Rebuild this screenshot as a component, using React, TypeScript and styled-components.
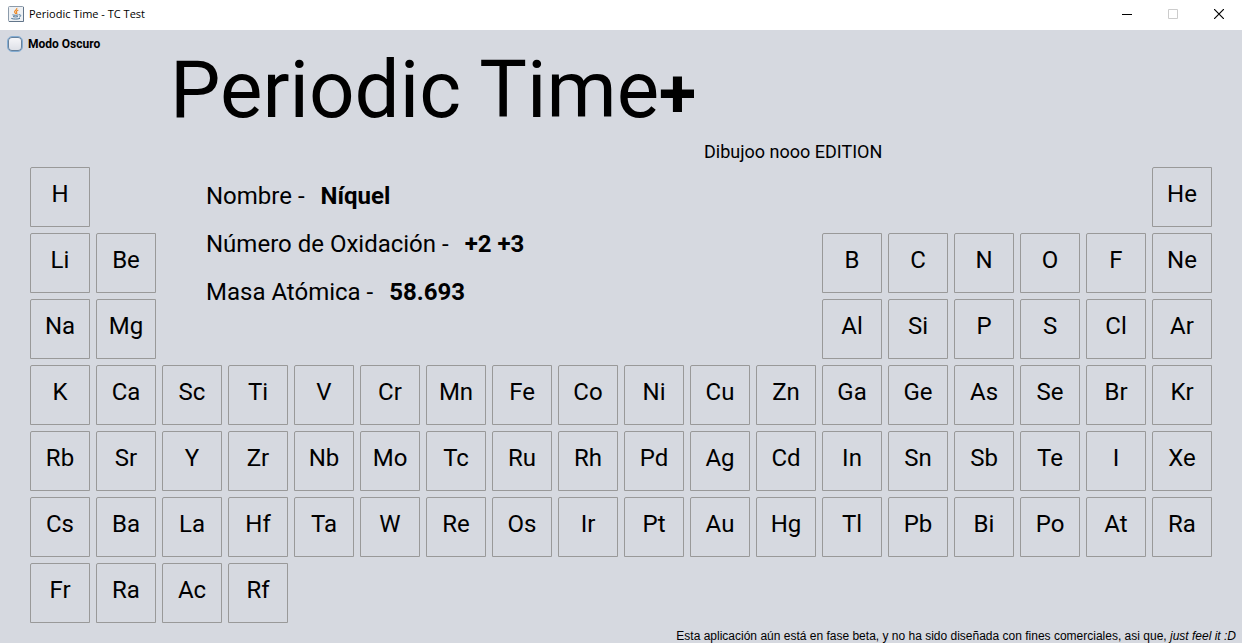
import React, { useState } from "react";
import styled, { createGlobalStyle } from "styled-components";

const GlobalStyle = createGlobalStyle`
  *, *::before, *::after { box-sizing: border-box; }
  html, body, #root { height: 100%; }
  body { margin: 0; background: #d6d9e0; }
`;

const Window = styled.div<{ $dark: boolean }>`
  display: flex;
  flex-direction: column;
  min-height: 100%;
  background: ${(p) => (p.$dark ? "#2b2d33" : "#d6d9e0")};
  color: ${(p) => (p.$dark ? "#f2f2f2" : "#000")};
  font-family: Roboto, sans-serif;
`;

const TitleBar = styled.header`
  display: flex;
  align-items: center;
  height: 30px;
  padding: 0 0 2px 8px;
  background: #fff;
  color: #000;
`;

const WindowTitle = styled.span`
  flex: 1;
  margin-left: 5px;
  font: 11px/16px "Open Sans", sans-serif;
`;

const WindowButton = styled.button<{ $muted?: boolean }>`
  display: flex;
  align-items: center;
  justify-content: center;
  width: 46px;
  height: 28px;
  padding: 0;
  border: 0;
  background: transparent;
  color: ${(p) => (p.$muted ? "#ccc" : "#000")};
`;

const ModeLabel = styled.label`
  display: flex;
  align-items: center;
  align-self: flex-start;
  gap: 5px;
  height: 28px;
  padding-left: 7px;
  font-size: 12px;
  font-weight: 700;
  line-height: 16px;
`;

const ModeCheckbox = styled.input`
  appearance: none;
  width: 16px;
  height: 16px;
  margin: 0;
  border: 1px solid #84add3;
  border-radius: 5px;
  background: linear-gradient(#f8f8fa, #dcdfe6);
  box-shadow: inset 0 0 0 1px #66819c;
  &:checked { background: #39698a; }
`;

const Heading = styled.div`
  display: flex;
  flex-direction: column;
  align-items: flex-start;
  padding-left: 170px;
`;

const AppTitle = styled.h1`
  margin: 0;
  font-size: 80px;
  font-weight: 400;
  line-height: 64px;
`;

const Plus = styled.span`
  font-size: 68px;
  font-weight: 700;
  line-height: 1px;
`;

const Edition = styled.p`
  margin: 20px 0 0 534px;
  font-size: 18px;
  line-height: 20px;
`;

const Table = styled.main`
  display: grid;
  grid-template-columns: repeat(18, minmax(0, 1fr));
  gap: 6px;
  margin-top: 5px;
  padding: 0 30px;
`;

const Element = styled.button<{ $column: number; $row: number }>`
  grid-column: ${(p) => p.$column};
  grid-row: ${(p) => p.$row};
  aspect-ratio: 1;
  padding: 0 0 6px;
  border: 1px solid #999;
  border-radius: 2px 0 0 0;
  background: transparent;
  color: inherit;
  font: 24px/28px Roboto, sans-serif;
`;

const Details = styled.dl`
  grid-column: 3 / 13;
  grid-row: 1 / 4;
  margin: 0;
  padding: 5px 0 0 44px;
  font-size: 24px;
  line-height: 48px;
`;

const Detail = styled.div`
  display: flex;
  gap: 16px;
`;

const Value = styled.dd`
  margin: 0;
  font-weight: 700;
`;

const Notice = styled.footer`
  margin-top: auto;
  padding-right: 6px;
  font: 12px/14px "Liberation Sans", sans-serif;
  text-align: right;
`;

const rows: [number, string[]][][] = [
  [[1, ["H"]], [18, ["He"]]],
  [[1, ["Li", "Be"]], [13, ["B", "C", "N", "O", "F", "Ne"]]],
  [[1, ["Na", "Mg"]], [13, ["Al", "Si", "P", "S", "Cl", "Ar"]]],
  [[1, "K Ca Sc Ti V Cr Mn Fe Co Ni Cu Zn Ga Ge As Se Br Kr".split(" ")]],
  [[1, "Rb Sr Y Zr Nb Mo Tc Ru Rh Pd Ag Cd In Sn Sb Te I Xe".split(" ")]],
  [[1, "Cs Ba La Hf Ta W Re Os Ir Pt Au Hg Tl Pb Bi Po At Ra".split(" ")]],
  [[1, ["Fr", "Ra", "Ac", "Rf"]]],
];

const details = [
  ["Nombre -", "Níquel"],
  ["Número de Oxidación -", "+2 +3"],
  ["Masa Atómica -", "58.693"],
];

const JavaIcon = () => (
  <svg width="16" height="16" viewBox="0 0 16 16" fill="none" aria-hidden="true">
    <rect x=".5" y=".5" width="15" height="15" rx="1" fill="#eef1f4" stroke="#8c9bab" />
    <path d="M1 15.5h14.5V1" stroke="#62758a" />
    <path d="M8.8 2c.6 1.800-2.800 2.600-2.200 4.200.2.700 1 1.100 1.300 1.800M10.300 4c-1.300.6-2.200 1.200-1.900 2.100.2.600.8 1 .2 1.900" stroke="#ee8a26" strokeWidth="1.200" />
    <path d="M4.500 8.800c1.500.6 4.500.6 6 0M5 10.600c1.500.5 3.800.5 5 0M3.300 12.400c2.200.9 6.500.9 8.700 0M11 8.800c2.400-.4 2.200 1.800.2 2.300" stroke="#4f7696" />
  </svg>
);

export default function App() {
  const [dark, setDark] = useState(false);
  return (
    <Window $dark={dark}>
      <GlobalStyle />
      <TitleBar>
        <JavaIcon />
        <WindowTitle>Periodic Time - TC Test</WindowTitle>
        <WindowButton aria-label="Minimizar">
          <svg width="10" height="10" shapeRendering="crispEdges"><path d="M0 5.500h10" stroke="currentColor" /></svg>
        </WindowButton>
        <WindowButton aria-label="Maximizar" $muted disabled>
          <svg width="10" height="10" fill="none"><path d="M.5.500h9v9h-9z" stroke="currentColor" /></svg>
        </WindowButton>
        <WindowButton aria-label="Cerrar">
          <svg width="10" height="10"><path d="M0 0l10 10M10 0L0 10" stroke="currentColor" strokeWidth="1.200" /></svg>
        </WindowButton>
      </TitleBar>
      <ModeLabel>
        <ModeCheckbox type="checkbox" checked={dark} onChange={(e) => setDark(e.target.checked)} />
        Modo Oscuro
      </ModeLabel>
      <Heading>
        <AppTitle>Periodic Time<Plus>+</Plus></AppTitle>
        <Edition>Dibujoo nooo EDITION</Edition>
      </Heading>
      <Table>
        <Details>
          {details.map(([name, value]) => (
            <Detail key={name}>
              <dt>{name}</dt>
              <Value>{value}</Value>
            </Detail>
          ))}
        </Details>
        {rows.map((groups, r) =>
          groups.map(([start, symbols]) =>
            symbols.map((symbol, i) => (
              <Element key={`${r}-${start + i}`} $column={start + i} $row={r + 1}>
                {symbol}
              </Element>
            ))
          )
        )}
      </Table>
      <Notice>
        Esta aplicación aún está en fase beta, y no ha sido diseñada con fines comerciales, asi que, <em>just feel it :D</em>
      </Notice>
    </Window>
  );
}
